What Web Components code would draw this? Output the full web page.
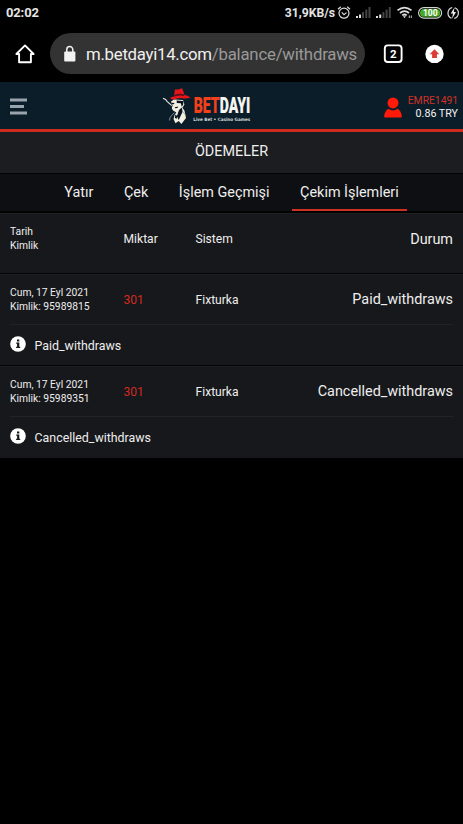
<!DOCTYPE html>
<html lang="tr">
<head>
<meta charset="utf-8">
<title>Ödemeler</title>
<style>
  body {
    margin: 0;
    min-height: 824px;
    background: #000;
    color: #eee;
    font-family: Roboto, sans-serif;
    overflow: hidden;
  }
</style>
</head>
<body>
<phone-status time="02:02" speed="31,9KB/s"></phone-status>
<browser-bar host="m.betdayi14.com" path="/balance/withdraws" tabs="2"></browser-bar>
<site-header user="EMRE1491" balance="0.86 TRY"></site-header>
<page-title>ÖDEMELER</page-title>
<tab-strip>
  <tab-item>Yatır</tab-item>
  <tab-item>Çek</tab-item>
  <tab-item>İşlem Geçmişi</tab-item>
  <tab-item active>Çekim İşlemleri</tab-item>
</tab-strip>
<payment-row head>
  <span slot="date">Tarih</span><span slot="id">Kimlik</span>
  <span slot="amount">Miktar</span><span slot="system">Sistem</span>
  <span slot="status">Durum</span>
</payment-row>
<payment-row>
  <span slot="date">Cum, 17 Eyl 2021</span><span slot="id">Kimlik: 95989815</span>
  <span slot="amount">301</span><span slot="system">Fixturka</span>
  <span slot="status">Paid_withdraws</span><span slot="note">Paid_withdraws</span>
</payment-row>
<payment-row>
  <span slot="date">Cum, 17 Eyl 2021</span><span slot="id">Kimlik: 95989351</span>
  <span slot="amount">301</span><span slot="system">Fixturka</span>
  <span slot="status">Cancelled_withdraws</span><span slot="note">Cancelled_withdraws</span>
</payment-row>

<script>
/** Attaches an open root holding the given markup. */
class BaseElement extends HTMLElement {
  constructor() {
    super();
    this.attachShadow({ mode: 'open' }).innerHTML = this.constructor.template;
  }
  fill(selector, attr) {
    this.shadowRoot.querySelector(selector).textContent = this.getAttribute(attr) ?? '';
  }
}

/** `<phone-status>`: clock, network speed and system icons. */
class PhoneStatus extends BaseElement {
  static template = `
<style>
  :host { display: flex; justify-content: space-between; height: 26px; line-height: 26px; color: #e4e4e4; }
  .time { padding-left: 6px; font-size: 13px; font-weight: 700; letter-spacing: -.15px; }
  .right { display: flex; }
  .speed { font-size: 12.2px; font-weight: 700; }
  svg { display: block; width: 128px; height: 26px; }
</style>
<span class="time"></span>
<div class="right">
  <span class="speed"></span>
  <svg viewBox="335 0 128 26" fill="none" stroke="#ddd">
    <circle cx="344" cy="13.2" r="5" stroke-width="1.2"/>
    <path d="M338 9.2l2.8-2.5M350 9.2l-2.8-2.5M341.8 12.4l2.2 2.2 2.5-2" stroke-width="1.2"/>
    <g stroke-width="2">
      <path d="M357 18v-2M360 18v-3.5"/>
      <path d="M363 18v-6M366.3 18v-8.5M369.5 18v-11" stroke="#444"/>
      <path d="M377 18v-2M380.2 18v-3.5"/>
      <path d="M383.4 18v-6M386.6 18v-8.5M389.8 18v-11" stroke="#444"/>
    </g>
    <g stroke-width="1.7">
      <path d="M397.5 10.4q7-5.6 14 0M400 13q4.5-3.6 9 0M402.3 15.4q2.2-1.8 4.4 0"/>
    </g>
    <path d="M403 16.2h3l-1.5 2z" fill="#ddd" stroke="none"/>
    <path d="M409.3 15.5v2.5M411.3 15.5v2.5" stroke-width=".9"/>
    <rect x="418.6" y="7.6" width="23" height="10.6" rx="5.3" stroke="#cfd8cc" stroke-width="1.2"/>
    <rect x="420" y="9" width="20.2" height="7.8" rx="3.9" fill="#46a823" stroke="none"/>
    <text x="430.3" y="16" text-anchor="middle" font-size="8.5" font-weight="700" fill="#fff" stroke="none">100</text>
    <path d="M452.2 7.5a5.7 5.7 0 0 0-.6 10.8M454.8 7.7a5.7 5.7 0 0 1-.6 10.8" stroke-width="1.2"/>
    <path d="M454.7 7.2l-4 6.3h2.3l-1 5.2 4-6.6h-2.3z" fill="#eee" stroke="none"/>
  </svg>
</div>`;
  connectedCallback() {
    this.fill('.time', 'time');
    this.fill('.speed', 'speed');
  }
}

/** `<browser-bar>`: home, address pill, tab count, update badge. */
class BrowserBar extends BaseElement {
  static template = `
<style>
  :host { display: flex; align-items: flex-start; height: 56px; padding-top: 7px; box-sizing: border-box; }
  svg { display: block; flex: none; }
  .pill {
    display: flex; align-items: center; box-sizing: border-box;
    width: 315px; height: 41px; padding-left: 13px;
    border-radius: 21px; background: #333; white-space: nowrap;
  }
  .url { margin-left: 9.5px; font-size: 16.8px; letter-spacing: -.27px; padding-top: 1px; }
  .host { color: #f0f0f0; }
  .path { color: #999; letter-spacing: -.22px; }
</style>
<svg width="49.5" height="41" viewBox="0 33 49.5 41" fill="none" stroke="#fff" stroke-width="1.9" stroke-linejoin="round">
  <path d="M16.4 54L25 45.4l8.6 8.6h-2.7v8.3H19.1V54z"/>
</svg>
<div class="pill">
  <svg width="14" height="18" viewBox="0 0 14 18">
    <rect x="1.2" y="6.4" width="11.2" height="10" rx="1" fill="#f2f2f2"/>
    <path d="M3.8 7V4.6a3 3 0 0 1 6 0V7" fill="none" stroke="#f2f2f2" stroke-width="1.5"/>
  </svg>
  <div class="url"><span class="host"></span><span class="path"></span></div>
</div>
<svg width="98" height="41" viewBox="365 33 98 41">
  <rect x="384.8" y="45.4" width="16.8" height="16.6" rx="3" fill="none" stroke="#fff" stroke-width="1.9"/>
  <text class="tabs" x="393.2" y="57.8" text-anchor="middle" font-size="11.5" font-weight="700" fill="#fff"></text>
  <circle cx="434.5" cy="53.9" r="9.2" fill="#fff"/>
  <path d="M434.5 49.3l4.8 5h-2.4v3.8h-4.8v-3.8h-2.4z" fill="#dc3c32"/>
</svg>`;
  connectedCallback() {
    this.fill('.host', 'host');
    this.fill('.path', 'path');
    this.fill('.tabs', 'tabs');
  }
}

/** `<brand-logo>`: hatted figure and the two-colour wordmark. */
class BrandLogo extends BaseElement {
  static template = `
<style>
  :host { display: block; }
  svg { display: block; }
</style>
<svg width="92" height="44" viewBox="12 2 92 44">
  <path d="M21 21.5l3-2 9 .5 1.4 4.5-2 3.2 2 2.8 1.6 7.5-4.6 6-2.7-3-3.2 2.3-2-4.2 1.3-4.5 1.6-2-3.4-2.1-1.3-2.5 1-2.5z" fill="#f3f0e2"/>
  <path d="M26.6 20.5l6.8.6-.2 3.4-1.4 2.2-1-3.4-4-.3zM22 22.7l2.5.2-.6 1.3-2-.2zM24.8 27.2l3.4-.6-.7 1.5-2.5.2zM29 30l2.8-2.5.8 4.2-3.9 8.3-1.8-3.8zM25.3 34.5l2 1.6-.8 2.8-1.6-1.2z" fill="#0b1720"/>
  <path d="M24.4 32.6l-4.2 4.7-.8 3.2M32.8 31.5l2.6 3.5" fill="none" stroke="#9ba5a4" stroke-width=".8"/>
  <path d="M13 18.3l2.6 1.1 1.4 2 4.8 4.2" fill="none" stroke="#e6e9e2" stroke-width="1.1"/>
  <path d="M20 17.7q2.2-.6 4.1-1.5l.8-6.8 3.2.2 4.1-1.4 2.4 6.7q3 .3 6 2.5-4.2 1.6-8.2.8-4.8-.8-8.4 1.3-2.7.4-4-1.8z" fill="#e7151b"/>
  <path d="M24.4 15.1q4.8-2.1 9.6-.7l.4 1.6q-5-1.3-10.2.8z" fill="#54101a"/>
  <text transform="translate(43.7 33.4) scale(1 1.98)" textLength="56.6" lengthAdjust="spacingAndGlyphs" font-family="Roboto, sans-serif" font-weight="900" font-size="11.4" stroke-width=".1"><tspan fill="#f4411c" stroke="#f4411c">BET</tspan><tspan fill="#f6f6f2" stroke="#f6f6f2">DAYI</tspan></text>
  <text x="43.3" y="40.6" textLength="57" lengthAdjust="spacingAndGlyphs" font-family="DejaVu Sans, sans-serif" font-weight="700" font-size="4.5" fill="#d5dadb">Live Bet • Casino Games</text>
</svg>`;
}

/** `<site-header>`: menu, logo and account summary. */
class SiteHeader extends BaseElement {
  static template = `
<style>
  :host {
    display: grid; grid-template-columns: 162px 92px 1fr; box-sizing: border-box;
    height: 50px; background: #0a1d29; border-bottom: 3px solid #cd2d20;
  }
  svg { display: block; }
  .account { display: flex; justify-content: flex-end; padding-right: 5px; }
  .account svg { margin: 14.5px 5.5px 0 0; }
  .text { padding-top: 12px; font-size: 10.7px; line-height: 13px; text-align: right; }
  .user { color: #ce3227; font-size: 10.4px; letter-spacing: -.05px; }
  .balance { color: #f3f3f3; }
</style>
<svg width="34" height="47" viewBox="0 82 34 47">
  <path d="M10 100.1h17M10 106.4h14M10 113h17" stroke="#99a4ac" stroke-width="3"/>
</svg>
<brand-logo></brand-logo>
<div class="account">
  <svg width="18" height="21" viewBox="0 0 18 21" fill="#ff1a09">
    <circle cx="9" cy="5.9" r="5.5"/>
    <path d="M1 20.4q-.9 0-.8-1.2.5-5.3 4.2-7.4Q9 15 13.6 11.8q3.7 2.1 4.2 7.4.1 1.2-.8 1.2z"/>
  </svg>
  <div class="text"><div class="user"></div><div class="balance"></div></div>
</div>`;
  connectedCallback() {
    this.fill('.user', 'user');
    this.fill('.balance', 'balance');
  }
}

/** `<page-title>`: centered caption bar. */
class PageTitle extends BaseElement {
  static template = `
<style>
  :host {
    display: block; box-sizing: border-box; height: 42px;
    background: #1c1d20; border-bottom: 1px solid #020203;
    font-size: 14.4px; line-height: 40px; text-align: center;
  }
</style>
<slot></slot>`;
}

/** `<tab-strip>`: row of `<tab-item>`s. */
class TabStrip extends BaseElement {
  static template = `
<style>
  :host {
    display: flex; justify-content: center; box-sizing: border-box; height: 39px;
    background: #0e0f12; border-bottom: 2px solid #030304;
  }
</style>
<slot></slot>`;
}

/** @attr {boolean} active  Underlines the tab */
class TabItem extends BaseElement {
  static template = `
<style>
  :host {
    display: block; box-sizing: border-box; height: 37px; margin: 0 6.7px; padding: 0 8.6px;
    font-size: 14.4px; line-height: 37px; white-space: nowrap;
    border-bottom: 2px solid transparent;
  }
  :host([active]) { border-color: #cf3024; }
</style>
<slot></slot>`;
}

/**
 * `<payment-row>`: one table line, with an info note below the cells.
 *
 * @attr {boolean} head  Column captions, no note
 */
class PaymentRow extends BaseElement {
  static template = `
<style>
  :host {
    display: block; box-sizing: border-box; height: 92px; padding: 0 10px;
    background: #17181b; border-top: 1px solid #1e1f22; border-bottom: 1px solid #030304;
  }
  :host(:last-of-type) { border-bottom: 0; }
  .cells {
    display: grid; grid-template-columns: 113.5px 72px 1fr auto; align-items: center;
    box-sizing: border-box; height: 50px; border-bottom: 1px solid #222326;
    font-size: 12.1px; white-space: nowrap;
  }
  .date { font-size: 10.3px; line-height: 14px; }
  .date slot { display: block; }
  .amount { color: #cf2a20; }
  .status { font-size: 14.4px; }
  .note { display: flex; align-items: center; height: 40px; gap: 8.5px; font-size: 12.4px; }
  .note svg { display: block; width: 16px; height: 16px; margin-top: -2px; }
  :host([head]) { height: 61px; }
  :host([head]) .cells { height: 50px; border: 0; }
  :host([head]) .amount { color: inherit; }
  :host([head]) .note { display: none; }
</style>
<div class="cells">
  <div class="date"><slot name="date"></slot><slot name="id"></slot></div>
  <div class="amount"><slot name="amount"></slot></div>
  <div><slot name="system"></slot></div>
  <div class="status"><slot name="status"></slot></div>
</div>
<div class="note">
  <svg viewBox="0 0 16 16">
    <circle cx="8" cy="8" r="7.8" fill="#fff"/>
    <path d="M7 3.4h2.3v2.1H7zM6.2 6.5h3.1v4.2h.9V12H6.1v-1.3h1V7.8h-.9z" fill="#17181b"/>
  </svg>
  <slot name="note"></slot>
</div>`;
}

customElements.define('phone-status', PhoneStatus);
customElements.define('browser-bar', BrowserBar);
customElements.define('brand-logo', BrandLogo);
customElements.define('site-header', SiteHeader);
customElements.define('page-title', PageTitle);
customElements.define('tab-strip', TabStrip);
customElements.define('tab-item', TabItem);
customElements.define('payment-row', PaymentRow);
</script>
</body>
</html>
